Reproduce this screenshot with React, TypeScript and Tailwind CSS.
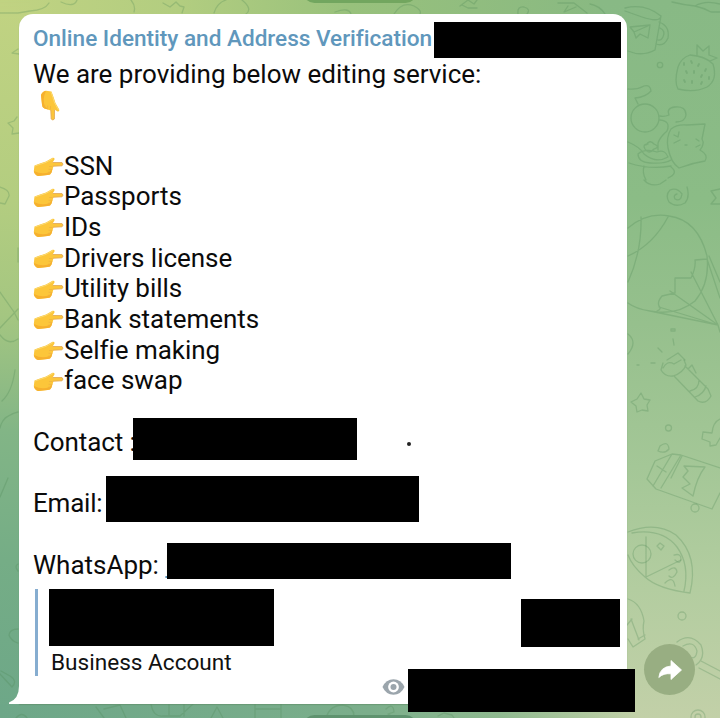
import React from "react";

function Doodles() {
  return (
    <svg className="absolute inset-0" width="720" height="718" viewBox="0 0 720 718" fill="none" stroke="#4f8a55" strokeOpacity="0.28" strokeWidth="1.3" strokeLinecap="round" strokeLinejoin="round">
      {/* mug */}
      <path d="M625 8Q645 3 661 16Q660 23 642 17L625 11M661 16L655 50Q642 57 628 51M659 22Q670 26 668 38Q664 47 656 44M660 28Q666 31 663 37Q661 41 658 40M630 27L650 25L648 38L640 34L636 38L634 32ZM634 32L650 25" />
      <path d="M672 2Q684 5 695 6Q704 8 711 12H720M695 6Q705 0 720 4" />
      {/* strawberry */}
      <path d="M690 55Q705 56 713 64Q718 80 707 87Q695 93 678 89Q674 82 678 67Q681 58 690 55ZM697 56L697 45L703 51L709 46L709 55L717 58L710 61L702 57" />
      <path d="M684 63v2M691 61l1 2M699 64l-1 2M706 69l-1 2M686 71l1 2M694 71v2M702 75l-1 2M684 80l1 2M692 81v2M701 84l1-2M709 77v2" strokeWidth="1.8" />
      <circle cx="660" cy="65" r="2.7" />
      {/* cat with yarn */}
      <circle cx="645" cy="118" r="14" />
      <path d="M628 89Q637 90 644 86Q650 84 651 91Q646 97 635 98L638 104M660 116Q664 117 669 115M669 115Q666 108 675 107Q686 106 686 115Q685 122 676 122M660 120Q671 121 667 131Q660 137 658 143L658 150M671 129Q677 124 687 125L705 124L702 139Q705 144 700 150Q709 155 705 161Q692 163 679 168Q671 163 668 148Q666 137 671 129ZM674 135l4 2l1-5M674 143l6-3M687 145h-2M696 139l3 2M696 147l4-2M628 142Q640 147 644 154Q656 164 668 157Q665 149 657 152Q645 148 638 154Q638 162 650 163Q665 164 671 160M646 145q4-6 8-1q7 3 0 5q-5 6-9 0q-3-5 3-5M629 163Q650 170 671 166M644 166Q642 173 646 180M671 167Q679 173 668 178" />
      <path d="M644 180Q650 187 660 184L666 180M687 187Q690 197 685 203Q676 208 669 202Q665 195 670 190Q677 187 682 194Q681 202 675 199Q673 195 677 194M720 189L711 191L716 198L711 204H720" />
      {/* parachute */}
      <path d="M628 228Q647 212 669 216Q698 220 707 256Q710 283 695 301Q677 316 650 311Q636 309 628 303M668 217Q653 245 628 256M641 217Q642 251 628 282M707 259L695 260Q696 268 691 278L675 278L675 293L662 296Q657 302 659 306Q662 309 657 311M707 259L720 298M709 256L720 282M691 272L718 325M670 291L718 325M659 307L718 325M650 311L718 325L720 332" />
      <path d="M671 331h4v-2h-4zM673 339l1 6M658 348l4 4M667 360l11-7l7 7M628 334q10 8 0 20M637 365h2M651 363h4" />
      {/* flashlight */}
      <path d="M663 363L661 370Q665 377 673 376Q683 373 686 365L684 360M663 368Q667 360 674 364L681 360M674 376L698 401Q706 405 711 396L708 389L685 366M690 391Q699 389 699 380M695 397Q704 394 706 386M688 369l4-4l4 8" />
      <path d="M641 393L644 399L650 400L647 405L648 411L642 410L637 412L636 406L631 402L637 399Z" />
      <circle cx="668.500" cy="428" r="3" />
      <path d="M660 446Q668 440 669 449Q665 454 658 451ZM720 419Q713 422 712 433L703 432L702 439L710 442V446L716 445L720 438" />
      {/* juice box */}
      <path d="M672 454L655 461L647 479L656 489L712 509L720 493M672 454L681 455L720 468M672 454L653 486M681 455L661 488M657 466L666 472M684 466L705 467Q697 477 693 496L682 488L690 484L683 477L688 471ZM671 478L682 456" />
      <circle cx="695" cy="508" r="4" />
      {/* pizza */}
      <path d="M628 532Q656 521 676 535Q699 556 690 593Q658 589 645 577Q632 566 628 555M632 533Q662 528 677 547Q690 565 684 591M646 537V577L681 560" />
      <circle cx="642" cy="554" r="9" />
      <path d="M657 546l3-3l4 3l-3 4zM674 555q7-2 7 4q-1 6-6 1M669 570q7-5 8 2q-4 8-8 4M665 583q8-8 10 3" />
      <path d="M628 599Q641 603 644 621Q642 629 645 639L633 647L628 639M631 619L639 640M638 639l7-4M627 625l5-6" />
      <circle cx="682" cy="616" r="4" />
      {/* lollipop */}
      <path d="M677 642Q690 632 701 645Q706 658 696 665M683 646Q694 640 697 651Q696 660 690 657M701 661L720 671M699 668L720 679" />
      <circle cx="698" cy="717" r="7" /><circle cx="698" cy="717" r="3" />
      {/* strips around the bubble */}
      <path d="M0 13H18L30 11Q45 10 49 3M61 2Q74 8 77 0M163 3l7 4l6-5l4 4l4 1l-2 6M131 0q5 6 3 12M214 13Q217 3 226 0M242 0Q253 9 246 14M335 12q14-5 16 2M394 14q8-13 20-8q8 4 6 8M460 6l8-6l6 4l3-4M462 5l6 3h9M518 14q-1-8 6-7q7 2 3 7M558 3h16l13 10M568 6l-4 6l12-5M590 4q10 2 15 10" />
      <path d="M18 49l-6 4l7 1M17 117l-3 4l-6 2l5 5l-1 6l7-1M0 187q10 3 9 9l-4 8l-5-1M18 248v14M0 292L14 312L18 320M0 328L18 309M0 335Q8 346 18 339M15 370Q12 392 2 401M18 412Q2 416 0 428M18 564q-4 2 0 7M8 478L0 497M18 629q-8 0-9 6q2 6 9 8M0 674L12 687Q18 681 10 676L1 671" />
      <path d="M96 707l8 11M104 709l16-4l6 13M151 704Q153 717 163 716H180L193 704M169 704v12M184 704v12M211 718l6-11l6 11M255 704v14M255 709h26V704M281 709v9M326 718Q330 705 343 705Q355 707 354 718M386 709q7-7 8 3l-6 2l7 4M438 716l6-3l8 2l2 3M16 718q6-7 11 0" />
    </svg>
  );
}

function HandShape() {
  return (
    <>
      <path d="M1.500 9.500Q8 7 13 5.500L19.500 1.800Q22 1.200 21.500 3.500L19.600 6.500L29 6.600Q31 8 29 9.800L20.500 10.200L18.500 16.500Q17.500 19 14.500 19L5 20Q1 18.500 0.800 15Z" fill="#fcc63a" />
      <path d="M1 15Q1.500 18.500 5 20L14.500 19Q17.500 19 18.500 16.500L19.500 12.500L16.500 16Q9 19 1 15Z" fill="#f6b02e" />
      <path d="M19.600 6.500L29 6.600Q31 8 29 9.800L20 10.200" fill="none" stroke="#e3aa58" strokeWidth="0.9" />
      <path d="M16 10.500L19.500 10.500M15.500 13.300L19 13.400M15 16.200L18 16.400" stroke="#eeb040" strokeWidth="0.7" />
      <path d="M2 10Q8 8 13 6.300L20 2.500" fill="none" stroke="#fbd970" strokeWidth="1" />
    </>
  );
}

function PointRight() {
  return (
    <svg className="mt-[2px] h-[22px] w-[31px] shrink-0" viewBox="0 0 31 22">
      <HandShape />
    </svg>
  );
}

function PointDown() {
  return (
    <svg className="ml-[6px] h-[31px] w-[22px]" viewBox="0 0 22 31">
      <g transform="matrix(0 1 -1 0 22 0)"><HandShape /></g>
    </svg>
  );
}

const services = ["SSN", "Passports", "IDs", "Drivers license", "Utility bills", "Bank statements", "Selfie making", "face swap"];

function Bubble() {
  return (
    <main className="relative h-[690px] w-[608px] shrink-0 rounded-t-[14px] rounded-br-[14px] bg-white pl-[14px] shadow-[0_1px_1px_#5b886388]">
      <svg className="absolute bottom-0 -left-[10px]" width="11" height="18" viewBox="0 0 11 18">
        <path d="M10 0Q10 13 0 16.500V18H11V0Z" fill="white" />
      </svg>
      <header className="flex h-[45px] items-start pt-2">
        <h1 className="w-[401px] pt-[3px] text-[22.600px] leading-[28px] font-medium tracking-[-0.020px] whitespace-nowrap text-[#6097bc]">Online Identity and Address Verification</h1>
        <span className="h-9 w-[187px] bg-black" />
      </header>
      <div className="text-[26px] leading-[30.700px] whitespace-nowrap text-[#0b0b0b]">
        <p>We are providing below editing service:</p>
        <div className="h-[60.900px]"><PointDown /></div>
        <ul className="tracking-[-0.030px]">
          {services.map((s) => (
            <li key={s} className="flex h-[30.700px] items-center"><PointRight /><span>{s}</span></li>
          ))}
        </ul>
        <div className="mt-[30.700px] flex h-[30.700px] items-center">
          <span className="w-[100px] tracking-[-0.100px]">Contact :</span>
          <span className="z-10 mb-[6px] h-[42px] w-56 shrink-0 bg-black" />
          <span className="mt-[3px] ml-[50px] size-1 rounded-full bg-[#222]" />
        </div>
        <div className="mt-[30.700px] flex h-[30.700px] items-center">
          <span className="w-[73px] tracking-[-0.200px]">Email:</span>
          <span className="mb-[9px] h-[46px] w-[313px] shrink-0 bg-black" />
        </div>
        <div className="mt-[30.700px] flex h-[30.700px] items-center">
          <span className="w-[134px]">WhatsApp: <span className="text-[#6097bc] underline">h</span></span>
          <span className="z-10 mb-2 h-9 w-[344px] shrink-0 bg-black" />
        </div>
      </div>
      <blockquote className="mt-[8.500px] mr-[7px] ml-[2px] flex h-[87px] justify-between border-l-[3px] border-[#86add0] pl-[11px]">
        <div>
          <div className="h-[57px] w-[225px] bg-black" />
          <p className="mt-[3px] ml-[2px] text-[22.600px] leading-[27px] text-[#111]">Business Account</p>
        </div>
        <span className="mt-[10px] h-12 w-[99px] bg-black" />
      </blockquote>
      <footer className="-mt-[7px] -mr-2 flex items-center justify-end gap-[3px]">
        <svg className="mb-[7px]" width="23" height="18" viewBox="0 0 23 18">
          <path d="M0.500 9Q4 1.300 11.500 1.300T22.500 9Q19 16.700 11.500 16.700T0.500 9Z" fill="#9ba5ac" />
          <circle cx="11.500" cy="9" r="5.400" fill="white" /><circle cx="11.500" cy="9" r="3" fill="#9ba5ac" />
        </svg>
        <span className="h-[43px] w-[227px] bg-black" />
      </footer>
    </main>
  );
}

export default function App() {
  return (
    <div className="relative flex h-[718px] w-[720px] overflow-hidden bg-[linear-gradient(90deg,#c1d382_0px,#b2cd80_180px,#98c17c_350px,#89b982_600px,#88b985_720px)] pt-[14px] pl-[19px] font-[Roboto,sans-serif]">
      <div className="absolute inset-y-0 left-0 w-[30px] bg-[linear-gradient(180deg,#c1d382_0%,#b3cd80_28%,#a4c681_44%,#82b586_60%,#75ad86_78%,#6da788_100%)] [mask-image:linear-gradient(180deg,transparent_0,black_20px)]" />
      <div className="absolute inset-y-0 right-0 w-[120px] bg-[linear-gradient(180deg,#88b985_0%,#8bbc86_28%,#96c08d_45%,#a4c797_65%,#b3cda0_82%,#c2d0a8_100%)]" />
      <div className="absolute bottom-0 left-0 h-[14px] w-[636px] bg-[linear-gradient(90deg,#6da788_0px,#7bae8b_370px,#8fb98f_500px,#c1d0a7_636px)]" />
      <Doodles />
      <span className="absolute -top-[20px] left-[303px] h-[23px] w-[114px] rounded-full bg-[#72a65f]" />
      <span className="absolute top-[715px] left-[303px] h-[23px] w-[114px] rounded-full bg-[#5f936f]" />
      <Bubble />
      <button aria-label="Share" className="relative mb-[23px] ml-[17px] flex size-[51px] shrink-0 items-center justify-center self-end rounded-full bg-[#98ae82]">
        <svg width="26" height="22" viewBox="0 0 26 22">
          <path d="M14 1.500L24.500 11L14 20.500V14.800Q6.500 14 1.800 18.500Q3 7.800 14 7Z" fill="white" stroke="white" strokeWidth="0.8" strokeLinejoin="round" />
        </svg>
      </button>
    </div>
  );
}
